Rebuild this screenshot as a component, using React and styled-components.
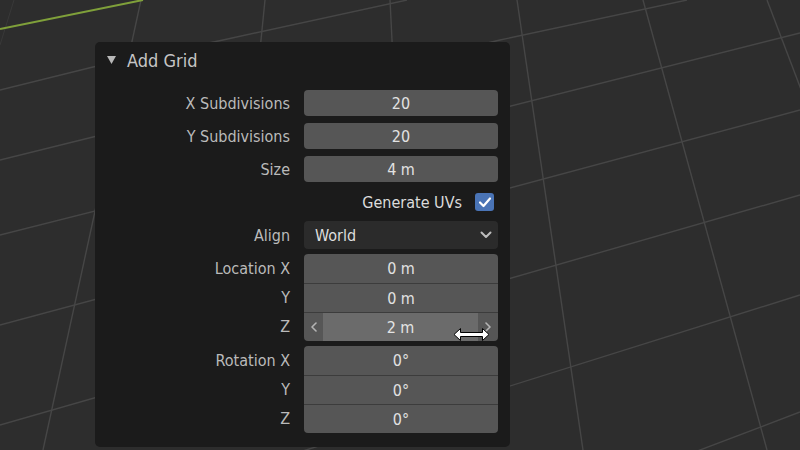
import React from 'react';
import styled, { createGlobalStyle, css } from 'styled-components';

const GlobalStyle = createGlobalStyle`
  html, body {
    margin: 0;
    padding: 0;
    background: #2d2d2d;
  }
  body {
    font-family: "DejaVu Sans Condensed", "DejaVu Sans", sans-serif;
  }
`;

const Viewport = styled.div`
  position: relative;
  width: 800px;
  height: 450px;
  overflow: hidden;
  background: #2d2d2d;
`;

const GridLines = styled.svg`
  position: absolute;
  inset: 0;
`;

const Panel = styled.section`
  position: absolute;
  left: 95px;
  top: 42px;
  width: 415px;
  height: 405px;
  box-sizing: border-box;
  padding-right: 12px;
  background: #1b1b1b;
  border-radius: 5px;
  display: flex;
  flex-direction: column;
`;

const Header = styled.div`
  height: 36px;
  display: flex;
  align-items: center;
  gap: 11px;
  padding-left: 12px;
  font-size: 18px;
  color: #c6c6c6;
`;

const Body = styled.div`
  display: flex;
  flex-direction: column;
  padding-top: 12px;
`;

const Row = styled.div`
  display: grid;
  grid-template-columns: 1fr 194px;
  column-gap: 14px;
  align-items: center;
  margin-top: ${(p) => p.$gap || 0}px;
`;

const Label = styled.div`
  text-align: right;
  font-size: 16px;
  color: #bababa;
`;

const corners = {
  single: '4px',
  first: '4px 4px 0 0',
  middle: '0',
  last: '0 0 4px 4px',
};

const Field = styled.div`
  position: relative;
  height: ${(p) => p.$h || 26}px;
  box-sizing: border-box;
  display: flex;
  align-items: center;
  justify-content: center;
  background: #565656;
  border-radius: ${(p) => corners[p.$pos || 'single']};
  color: #e2e2e2;
  font-size: 16px;
  ${(p) =>
    p.$pos && p.$pos !== 'first' && p.$pos !== 'single' &&
    css`
      border-top: 1px solid #3c3c3c;
    `}
`;

const Arrow = styled.div`
  width: ${(p) => p.$w}px;
  height: 100%;
  display: flex;
  align-items: center;
  justify-content: center;
`;

const Hot = styled.div`
  flex: 1;
  height: 100%;
  display: flex;
  align-items: center;
  justify-content: center;
  background: #6b6b6b;
  color: #e4e4e4;
`;

const Cursor = styled.svg`
  position: absolute;
  left: 149px;
  top: 14px;
`;

const Dropdown = styled.div`
  height: 28px;
  box-sizing: border-box;
  display: flex;
  align-items: center;
  justify-content: space-between;
  padding: 0 6px 0 11px;
  background: #2b2b2b;
  border-radius: 4px;
  color: #dedede;
  font-size: 16px;
`;

const CheckRow = styled.div`
  height: 26px;
  display: flex;
  align-items: center;
  justify-content: flex-end;
  gap: 13px;
  padding-right: 4px;
  font-size: 16px;
  color: #dcdcdc;
`;

const Checkbox = styled.div`
  width: 19px;
  height: 18px;
  border-radius: 3px;
  background: #4a74b6;
  display: flex;
  align-items: center;
  justify-content: center;
`;

const gray = [
  '0,90 93,67 223,40 407,0',
  '0,160 93,137 500,40 687,0',
  '0,235 800,33',
  '0,325 800,110',
  '0,425 800,195',
  '0,546 800,295',
  '600,488 800,412',
  '141,0 43,450',
  '265,0 255,100',
  '390,0 393,60',
  '517,0 583,450',
  '643,0 767,450',
  '767,0 938,450',
];

function Background() {
  return (
    <GridLines width="800" height="450" viewBox="0 0 800 450">
      <polyline points="14,0 0,45" fill="none" stroke="#393939" strokeWidth="1" />
      {gray.map((pts) => (
        <polyline key={pts} points={pts} fill="none" stroke="#464646" strokeWidth="1.4" />
      ))}
      <polyline points="0,29 143,0" fill="none" stroke="#7fa03a" strokeWidth="2" />
    </GridLines>
  );
}

const Triangle = () => (
  <svg width="9" height="8" viewBox="0 0 9 8">
    <polygon points="0,0 9,0 4.5,8" fill="#b8b8b8" />
  </svg>
);

const Chevron = () => (
  <svg width="12" height="8" viewBox="0 0 12 8">
    <polyline points="1.5,1.5 6,6 10.5,1.5" fill="none" stroke="#bdbdbd" strokeWidth="2" strokeLinecap="round" strokeLinejoin="round" />
  </svg>
);

const Side = ({ dir }) => (
  <svg width="6" height="10" viewBox="0 0 6 10">
    <polyline
      points={dir === 'left' ? '5,1 1,5 5,9' : '1,1 5,5 1,9'}
      fill="none"
      stroke="#b4b4b4"
      strokeWidth="1.6"
      strokeLinecap="round"
      strokeLinejoin="round"
    />
  </svg>
);

const Check = () => (
  <svg width="14" height="12" viewBox="0 0 14 12">
    <polyline points="2,6.5 5.5,10 12,2.5" fill="none" stroke="#ffffff" strokeWidth="2.2" strokeLinecap="round" strokeLinejoin="round" />
  </svg>
);

function GroupRows({ labels, values, gap, hot }) {
  return labels.map((label, i) => {
    const pos = i === 0 ? 'first' : i === labels.length - 1 ? 'last' : 'middle';
    return (
      <Row key={label + i} $gap={i === 0 ? gap : 0}>
        <Label>{label}</Label>
        <Field $pos={pos} $h={29}>
          {hot === i ? (
            <>
              <Arrow $w={19}><Side dir="left" /></Arrow>
              <Hot>{values[i]}</Hot>
              <Arrow $w={20}><Side dir="right" /></Arrow>
              <Cursor width="37" height="15" viewBox="0 0 37 15">
                <path
                  d="M1,7.5 L7.5,1.5 L7.5,5.5 L29.5,5.5 L29.5,1.5 L36,7.5 L29.5,13.5 L29.5,9.5 L7.5,9.5 L7.5,13.5 Z"
                  fill="#ffffff"
                  stroke="#000000"
                  strokeWidth="1"
                  strokeLinejoin="round"
                />
              </Cursor>
            </>
          ) : (
            values[i]
          )}
        </Field>
      </Row>
    );
  });
}

export default function App() {
  return (
    <Viewport>
      <GlobalStyle />
      <Background />
      <Panel>
        <Header>
          <Triangle />
          <span>Add Grid</span>
        </Header>
        <Body>
          <Row>
            <Label>X Subdivisions</Label>
            <Field>20</Field>
          </Row>
          <Row $gap={7}>
            <Label>Y Subdivisions</Label>
            <Field>20</Field>
          </Row>
          <Row $gap={7}>
            <Label>Size</Label>
            <Field>4 m</Field>
          </Row>
          <Row $gap={7}>
            <span />
            <CheckRow>
              <span>Generate UVs</span>
              <Checkbox><Check /></Checkbox>
            </CheckRow>
          </Row>
          <Row $gap={6}>
            <Label>Align</Label>
            <Dropdown>
              <span>World</span>
              <Chevron />
            </Dropdown>
          </Row>
          <GroupRows labels={['Location X', 'Y', 'Z']} values={['0 m', '0 m', '2 m']} gap={5} hot={2} />
          <GroupRows labels={['Rotation X', 'Y', 'Z']} values={['0°', '0°', '0°']} gap={5} />
        </Body>
      </Panel>
    </Viewport>
  );
}
